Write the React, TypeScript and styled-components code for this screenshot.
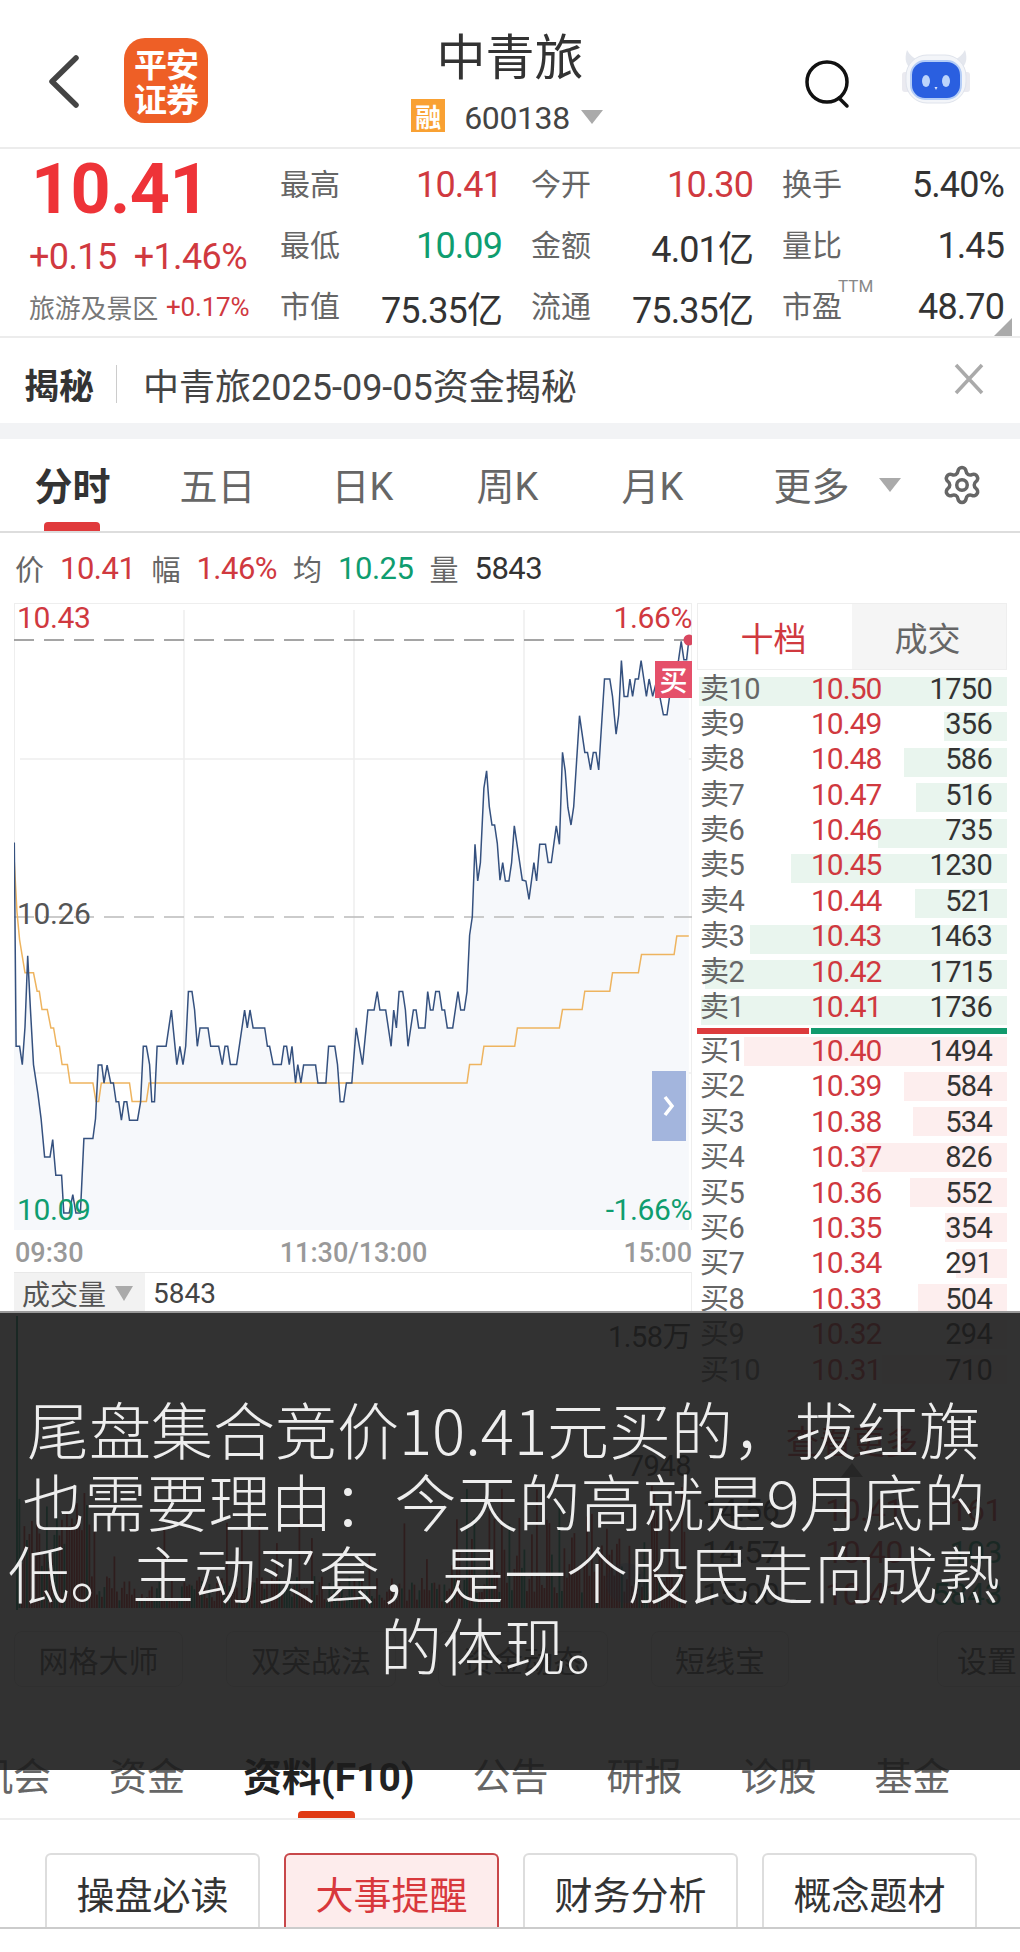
import styled, { createGlobalStyle } from 'styled-components';
import { Settings } from 'lucide-react';

const NUM = `Roboto, 'Noto Sans CJK SC', sans-serif`;
const CJK = `'Noto Sans CJK SC', sans-serif`;
const RED = '#d0393f';
const GREEN = '#0f9d6f';

const GlobalStyle = createGlobalStyle`
  html, body { margin: 0; padding: 0; background: #fff; }
  * { box-sizing: border-box; }
  body { font-family: ${CJK}; }
`;

// points read off the reference crop, converted to chart coordinates below
const PRICE = [[32,528],[36,972],[44,972],[50,1012],[56,930],[62,775],[68,890],[75,1012],[85,1075],[92,1130],[100,1213],[112,1213],[118,1175],[125,1253],[138,1253],[143,1335],[155,1335],[163,1295],[170,1335],[180,1335],[188,1173],[208,1173],[214,1130],[220,1013],[228,1013],[233,1052],[240,1013],[248,1052],[254,1052],[260,1093],[266,1093],[272,1133],[278,1093],[284,1093],[290,1133],[308,1133],[315,1093],[321,972],[328,972],[335,1012],[340,1093],[346,1093],[352,972],[372,972],[384,893],[396,1012],[403,972],[410,1012],[416,972],[422,853],[430,853],[436,893],[442,972],[448,932],[466,932],[472,972],[490,972],[498,1012],[504,972],[510,972],[516,1012],[530,1012],[548,893],[554,932],[560,893],[567,932],[593,932],[599,972],[604,972],[612,1012],[630,1012],[636,972],[642,972],[648,1012],[654,972],[662,1052],[667,1012],[674,1052],[680,1013],[707,1013],[712,1052],[730,1052],[736,972],[750,972],[756,1012],[762,1093],[770,1093],[776,1052],[788,1052],[798,932],[812,1012],[824,893],[838,893],[845,853],[851,893],[864,893],[876,972],[882,893],[888,932],[894,853],[902,853],[908,893],[914,972],[926,893],[932,893],[938,932],[952,932],[958,853],[964,893],[970,893],[976,853],[984,853],[990,893],[996,893],[1002,932],[1014,932],[1026,853],[1032,893],[1040,893],[1046,853],[1052,730],[1058,690],[1064,532],[1070,612],[1076,572],[1084,410],[1090,372],[1096,450],[1102,490],[1108,490],[1114,530],[1120,610],[1126,572],[1132,612],[1140,612],[1146,572],[1152,492],[1170,610],[1178,612],[1185,652],[1196,572],[1202,612],[1209,532],[1222,532],[1228,572],[1235,572],[1246,492],[1253,532],[1260,332],[1266,372],[1272,452],[1279,490],[1285,450],[1298,252],[1310,332],[1316,332],[1323,370],[1329,332],[1335,332],[1341,370],[1354,172],[1366,172],[1372,210],[1380,292],[1386,250],[1392,132],[1398,210],[1406,210],[1411,172],[1417,210],[1423,172],[1430,172],[1436,132],[1448,210],[1454,172],[1462,210],[1472,172],[1478,210],[1486,250],[1494,250],[1500,210],[1512,172],[1520,130],[1526,90],[1532,130],[1538,130],[1543,88]];
const AVG = [[32,570],[38,680],[44,740],[56,812],[75,812],[83,852],[88,852],[94,892],[106,892],[114,932],[120,932],[127,972],[133,972],[139,1012],[151,1012],[157,1052],[208,1052],[215,1092],[221,1092],[227,1052],[290,1052],[296,1092],[328,1092],[334,1052],[1046,1052],[1052,1012],[1078,1012],[1084,972],[1153,972],[1159,932],[1253,932],[1260,892],[1304,892],[1310,852],[1366,852],[1372,812],[1430,812],[1437,772],[1510,772],[1516,732],[1543,732]];

const toChart = (pts: number[][]) =>
  pts.map(([x, y]) => `${(x / 2.24 - 14).toFixed(1)},${(y / 2.178 + 600 - 604).toFixed(1)}`).join(' ');

const SELLS: [string, string, number][] = [
  ['10', '10.50', 1750], ['9', '10.49', 356], ['8', '10.48', 586], ['7', '10.47', 516], ['6', '10.46', 735],
  ['5', '10.45', 1230], ['4', '10.44', 521], ['3', '10.43', 1463], ['2', '10.42', 1715], ['1', '10.41', 1736],
];
const BUYS: [string, string, number][] = [
  ['1', '10.40', 1494], ['2', '10.39', 584], ['3', '10.38', 534], ['4', '10.37', 826], ['5', '10.36', 552],
  ['6', '10.35', 354], ['7', '10.34', 291], ['8', '10.33', 504], ['9', '10.32', 294], ['10', '10.31', 710],
];

const volumeBars = () => {
  const bars = [];
  for (let i = 0; i < 268; i++) {
    const r = Math.abs(Math.sin(i * 12.9898) * 43758.5453) % 1;
    const r2 = Math.abs(Math.sin(i * 78.233) * 12543.123) % 1;
    let h = 6 + r * 26;
    if (i < 30) h = 40 + r * 75;
    else if (i > 170) h = 15 + r * r * 110;
    else if (r2 > 0.9) h = 40 + r * 50;
    bars.push({ x: 2 + i * 2.5, h, up: r2 > 0.35 });
  }
  return bars;
};

const Page = styled.div`
  position: relative;
  width: 1020px;
  height: 1952px;
  overflow: hidden;
  background: #fff;
`;

const Header = styled.header`
  height: 149px;
  display: grid;
  grid-template-columns: 1fr auto 1fr;
  border-bottom: 2px solid #ececec;
`;

const HeaderLeft = styled.div`
  display: flex;
  align-items: flex-start;
  padding: 38px 0 0 47px;
  gap: 44px;
`;

const BackIcon = styled.svg`
  width: 33px;
  height: 55px;
  margin-top: 16px;
`;

const Logo = styled.div`
  width: 84px;
  height: 85px;
  border-radius: 21px;
  background: #ee5f26;
  color: #fff;
  font-weight: 700;
  font-size: 33px;
  line-height: 35px;
  letter-spacing: -1px;
  display: flex;
  align-items: center;
  justify-content: center;
  text-align: center;
`;

const TitleBlock = styled.div`
  display: flex;
  flex-direction: column;
  align-items: center;
  padding-top: 20px;
`;

const Title = styled.div`
  font-size: 49px;
  line-height: 68px;
  color: #333;
`;

const CodeRow = styled.div`
  display: flex;
  align-items: center;
  margin-top: 4px;
  margin-left: -6px;
`;

const Badge = styled.span`
  width: 34px;
  height: 33px;
  background: #f9a133;
  color: #fff;
  font-size: 26px;
  font-weight: 700;
  line-height: 33px;
  text-align: center;
  overflow: hidden;
`;

const Code = styled.span`
  font-family: ${NUM};
  font-size: 32px;
  color: #444;
  margin-left: 19px;
  letter-spacing: -0.4px;
  line-height: 40px;
  padding-top: 6px;
`;

const Caret = styled.span`
  width: 0;
  height: 0;
  border-left: 11px solid transparent;
  border-right: 11px solid transparent;
  border-top: 14px solid #aaa;
`;

const CodeCaret = styled(Caret)`
  margin: 4px 0 0 11px;
`;

const HeaderRight = styled.div`
  display: flex;
  justify-content: flex-end;
  align-items: flex-start;
  padding: 48px 50px 0 0;
  gap: 52px;
`;

const SearchIcon = styled.svg`
  width: 46px;
  height: 50px;
  margin-top: 12px;
`;

const RobotIcon = styled.svg`
  width: 68px;
  height: 56px;
`;

const Quote = styled.section`
  position: relative;
  height: 189px;
  display: flex;
  border-bottom: 2px solid #ececec;
`;

const QuoteLeft = styled.div`
  width: 280px;
  padding-left: 29px;
`;

const BigPrice = styled.div`
  font-family: ${NUM};
  font-size: 70px;
  font-weight: 700;
  color: #ee3338;
  line-height: 80px;
  margin: 0 0 0 2px;
  letter-spacing: -0.6px;
`;

const ChangeRow = styled.div`
  display: flex;
  gap: 17px;
  font-family: ${NUM};
  font-size: 36px;
  letter-spacing: -0.6px;
  color: ${RED};
  line-height: 44px;
  margin-top: 6px;
`;

const SectorRow = styled.div`
  display: flex;
  align-items: center;
  gap: 8px;
  margin-top: 9px;
  font-size: 26px;
  color: #777;
  line-height: 38px;
  letter-spacing: -0.2px;
`;

const SectorValue = styled.span`
  font-family: ${NUM};
  font-size: 26px;
  color: ${RED};
`;

const StatGrid = styled.div`
  display: grid;
  grid-template-columns: repeat(3, 222px);
  grid-auto-rows: 61px;
  column-gap: 29px;
  padding-top: 5px;
`;

const Stat = styled.div`
  display: flex;
  justify-content: space-between;
  align-items: center;
`;

const StatLabel = styled.span`
  position: relative;
  font-size: 30px;
  line-height: 36px;
  padding-bottom: 5px;
  color: #666;
`;

const StatValue = styled.span<{ $color?: string }>`
  font-family: ${NUM};
  font-size: 36px;
  letter-spacing: -0.9px;
  color: ${p => p.$color || '#333'};
`;

const Ttm = styled.sup`
  position: absolute;
  left: 56px;
  top: -10px;
  font-family: ${NUM};
  font-size: 17px;
  line-height: 20px;
  color: #888;
`;

const CornerMark = styled.span`
  position: absolute;
  right: 8px;
  bottom: 0;
  width: 0;
  height: 0;
  border-left: 18px solid transparent;
  border-bottom: 18px solid #aaa;
`;

const Banner = styled.div`
  height: 85px;
  display: flex;
  align-items: center;
  padding: 7px 35px 0 24px;
`;

const BannerTag = styled.span`
  font-size: 35px;
  font-weight: 700;
  color: #333;
  padding-right: 22px;
  line-height: 38px;
  border-right: 1px solid #ccc;
`;

const BannerText = styled.span`
  flex: 1;
  font-family: ${NUM};
  font-size: 36px;
  color: #444;
  margin-left: 26px;
`;

const CloseIcon = styled.svg`
  width: 32px;
  height: 32px;
  margin-top: -10px;
`;

const Band = styled.div`
  height: 16px;
  background: #f2f3f5;
`;

const Tabs = styled.nav`
  height: 94px;
  display: flex;
  align-items: center;
  border-bottom: 2px solid #ddd;
`;

const TabItem = styled.div<{ $active?: boolean }>`
  position: relative;
  width: 145px;
  height: 100%;
  display: flex;
  align-items: center;
  justify-content: center;
  padding-bottom: 4px;
  font-family: ${NUM};
  font-size: 38px;
  font-weight: ${p => (p.$active ? 700 : 400)};
  color: ${p => (p.$active ? '#333' : '#666')};
`;

const TabMark = styled.span`
  position: absolute;
  left: 44px;
  bottom: 0;
  width: 56px;
  height: 9px;
  border-radius: 4px 4px 0 0;
  background: #e03a3c;
`;

const MoreTab = styled(TabItem)`
  margin-left: 39px;
  width: 146px;
`;

const MoreCaret = styled(Caret)`
  margin: 4px 0 0 29px;
`;

const GearWrap = styled.div`
  margin-left: auto;
  padding-right: 37px;
  color: #666;
  display: flex;
`;

const InfoRow = styled.div`
  height: 70px;
  display: flex;
  align-items: center;
  gap: 16px;
  padding-left: 15px;
  font-size: 29px;
  color: #666;
`;

const InfoValue = styled.span<{ $color: string }>`
  font-family: ${NUM};
  font-size: 31px;
  letter-spacing: -0.5px;
  color: ${p => p.$color};
`;

const Main = styled.div`
  display: flex;
  height: 1137px;
  padding-left: 14px;
  gap: 5px;
`;

const LeftCol = styled.div`
  width: 678px;
`;

const ChartBox = styled.div`
  position: relative;
  height: 627px;
  border-top: 1px solid #eee;
`;

const ChartSvg = styled.svg`
  display: block;
`;

const ChartLabel = styled.span<{ $color: string; $side: 'left' | 'right'; $top: number }>`
  position: absolute;
  top: ${p => p.$top}px;
  ${p => p.$side}: ${p => (p.$side === 'left' ? 3 : 0)}px;
  font-family: ${NUM};
  font-size: 30px;
  line-height: 30px;
  letter-spacing: -0.4px;
  color: ${p => p.$color};
`;

const BuyTag = styled.span`
  position: absolute;
  left: 641px;
  top: 57px;
  width: 37px;
  height: 37px;
  background: #e5506a;
  color: #fff;
  font-size: 28px;
  font-weight: 500;
  line-height: 36px;
  text-align: center;
`;

const ExpandTab = styled.div`
  position: absolute;
  left: 638px;
  top: 467px;
  width: 34px;
  height: 70px;
  background: #a3b5dd;
  display: flex;
  align-items: center;
  justify-content: center;
`;

const TimeAxis = styled.div`
  height: 42px;
  display: flex;
  justify-content: space-between;
  align-items: center;
  padding: 4px 0 0 1px;
  font-family: ${NUM};
  font-size: 27px;
  font-weight: 500;
  color: #999;
`;

const VolumeHead = styled.div`
  height: 41px;
  display: flex;
  align-items: center;
  border-top: 1px solid #e8e8e8;
  border-right: 1px solid #eee;
`;

const VolumeSelect = styled.div`
  width: 131px;
  height: 100%;
  background: #f2f2f2;
  display: flex;
  align-items: center;
  padding-left: 8px;
  font-size: 28px;
  color: #555;
  gap: 9px;
`;

const VolumeCaret = styled(Caret)`
  border-left-width: 9px;
  border-right-width: 9px;
  border-top-width: 15px;
`;

const VolumeValue = styled.span`
  font-family: ${NUM};
  font-size: 28px;
  color: #444;
  margin-left: 8px;
`;

const VolumeChart = styled.div`
  position: relative;
  height: 297px;
`;

const VolumeSvg = styled.svg`
  display: block;
`;

const VolumeTag = styled.span<{ $top: number }>`
  position: absolute;
  right: 1px;
  top: ${p => p.$top}px;
  font-family: ${NUM};
  font-size: 29px;
  letter-spacing: -0.5px;
  color: #333;
`;

const ToolBar = styled.div`
  display: flex;
  margin-top: 21px;
  height: 56px;
  width: 1006px;
`;

const ToolButton = styled.div<{ $w: number; $gap: number }>`
  width: ${p => p.$w}px;
  margin-right: ${p => p.$gap}px;
  flex: none;
  border: 1px solid #ddd;
  border-radius: 8px;
  display: flex;
  align-items: center;
  justify-content: center;
  font-size: 30px;
  color: #555;
`;

const RightCol = styled.div`
  width: 310px;
`;

const BookTabs = styled.div`
  display: flex;
  height: 67px;
  font-size: 33px;
  border: 1px solid #eee;
`;

const BookTab = styled.div<{ $active?: boolean }>`
  flex: 1;
  display: flex;
  align-items: center;
  justify-content: center;
  padding-right: 3px;
  background: ${p => (p.$active ? '#fff' : '#f5f5f5')};
  color: ${p => (p.$active ? RED : '#666')};
`;

const BookList = styled.div<{ $top: number }>`
  display: flex;
  flex-direction: column;
  gap: 6.4px;
  margin-top: ${p => p.$top}px;
`;

const BookRow = styled.div<{ $lift: number }>`
  position: relative;
  height: 29px;
  display: flex;
  align-items: center;
  padding: 0 15px ${p => p.$lift}px 3px;
`;

const DepthBar = styled.span<{ $color: string }>`
  position: absolute;
  top: 0;
  right: 0;
  bottom: 0;
  background: ${p => p.$color};
`;

const RowLabel = styled.span`
  position: relative;
  width: 111px;
  font-size: 29px;
  line-height: 24px;
  color: #666;
  font-family: ${NUM};
  letter-spacing: -0.5px;
`;

const RowPrice = styled.span`
  position: relative;
  font-family: ${NUM};
  font-size: 30px;
  line-height: 22px;
  letter-spacing: -1px;
  color: ${RED};
`;

const RowQty = styled.span`
  position: relative;
  margin-left: auto;
  font-family: ${NUM};
  font-size: 29px;
  line-height: 22px;
  letter-spacing: -0.7px;
  color: #333;
`;

const SplitBar = styled.div`
  display: flex;
  height: 6px;
  margin-top: 3px;
  gap: 2px;
`;

const SplitPart = styled.span<{ $color: string; $w: number }>`
  width: ${p => p.$w}px;
  background: ${p => p.$color};
`;

const MoreLink = styled.div`
  margin-top: 36px;
  text-align: center;
  font-size: 33px;
  line-height: 40px;
  color: ${RED};
`;

const UpCaret = styled.span`
  display: block;
  width: 0;
  margin: 3px auto 0 auto;
  border-left: 11px solid transparent;
  border-right: 11px solid transparent;
  border-bottom: 14px solid #888;
`;

const TradeList = styled.div`
  display: flex;
  flex-direction: column;
  margin-top: 12px;
`;

const TradeRow = styled.div`
  height: 42px;
  display: flex;
  align-items: center;
  padding: 0 5px;
  font-family: ${NUM};
  font-size: 32px;
  letter-spacing: -0.5px;
  color: #333;
`;

const TradePrice = styled.span`
  color: ${RED};
  margin-left: 46px;
`;

const TradeQty = styled.span<{ $color: string }>`
  margin-left: auto;
  color: ${p => p.$color};
`;

const SubTabBar = styled.div`
  position: relative;
  height: 80px;
  overflow: hidden;
  border-bottom: 2px solid #eee;
`;

const SubTabs = styled.nav`
  height: 79px;
  display: flex;
  align-items: center;
  gap: 58px;
  margin-left: -25px;
  width: 1045px;
  padding-bottom: 12px;
`;

const SubTab = styled.span<{ $active?: boolean }>`
  font-family: ${NUM};
  font-size: ${p => (p.$active ? 39 : 38)}px;
  font-weight: ${p => (p.$active ? 700 : 400)};
  color: ${p => (p.$active ? '#222' : '#666')};
`;

const SubTabMark = styled.span`
  position: absolute;
  left: 298px;
  bottom: 0;
  width: 57px;
  height: 7px;
  border-radius: 4px 4px 0 0;
  background: #e03a14;
`;

const CardRow = styled.div`
  display: flex;
  gap: 24px;
  padding: 33px 0 0 45px;
`;

const Card = styled.div<{ $active?: boolean }>`
  width: 215px;
  height: 74px;
  border: 2px solid ${p => (p.$active ? '#c8474a' : '#ddd')};
  border-bottom: 0;
  border-radius: 6px 6px 0 0;
  background: ${p => (p.$active ? '#fdecec' : '#fff')};
  color: ${p => (p.$active ? '#d8383c' : '#333')};
  font-size: 38px;
  display: flex;
  align-items: center;
  justify-content: center;
  padding-top: 2px;
`;

const BottomLine = styled.div`
  border-top: 2px solid #ccc;
`;

const Caption = styled.div`
  position: absolute;
  left: 0;
  right: 0;
  top: 1311px;
  height: 459px;
  padding: 79px 16px 0 4px;
  background: rgba(28, 28, 28, 0.9);
  border-top: 2px solid #999;
  color: #eee;
  font-family: ${CJK};
  font-size: 62px;
  font-weight: 300;
  line-height: 72px;
  text-align: center;
`;

const StockHeader = () => (
  <Header>
    <HeaderLeft>
      <BackIcon viewBox="0 0 33 55" fill="none">
        <path d="M29 4 L5 27.5 L29 51" stroke="#444" strokeWidth="5.5" strokeLinecap="round" strokeLinejoin="round" />
      </BackIcon>
      <Logo>平安<br />证券</Logo>
    </HeaderLeft>
    <TitleBlock>
      <Title>中青旅</Title>
      <CodeRow>
        <Badge>融</Badge>
        <Code>600138</Code>
        <CodeCaret />
      </CodeRow>
    </TitleBlock>
    <HeaderRight>
      <SearchIcon viewBox="0 0 46 50" fill="none">
        <circle cx="23" cy="22" r="20" stroke="#111" strokeWidth="3.5" />
        <path d="M35 38 L43 46" stroke="#111" strokeWidth="3.5" strokeLinecap="round" />
      </SearchIcon>
      <RobotIcon viewBox="0 0 68 56">
        <path d="M5 2 C2 11 4 18 10 21 L15 11 C11 10 8 7 5 2 Z M63 2 C66 11 64 18 58 21 L53 11 C57 10 60 7 63 2 Z" fill="#e4e7ee" />
        <rect x="0" y="24" width="8" height="20" rx="3" fill="#eaeaf0" />
        <rect x="60" y="24" width="8" height="20" rx="3" fill="#eaeaf0" />
        <rect x="4" y="7" width="60" height="48" rx="21" fill="#f3f5f9" stroke="#dfe3ec" />
        <rect x="9" y="13" width="50" height="38" rx="14" fill="#2a5fe0" stroke="#b4cdf7" strokeWidth="2" />
        <ellipse cx="24" cy="33" rx="4" ry="6" fill="#bcd4fb" />
        <ellipse cx="44" cy="33" rx="4" ry="6" fill="#bcd4fb" />
        <path d="M32.5 39 h3 l-1.5 3 z" fill="#dbe7fd" />
      </RobotIcon>
    </HeaderRight>
  </Header>
);

const QuotePanel = () => (
  <Quote>
    <QuoteLeft>
      <BigPrice>10.41</BigPrice>
      <ChangeRow><span>+0.15</span><span>+1.46%</span></ChangeRow>
      <SectorRow>旅游及景区<SectorValue>+0.17%</SectorValue></SectorRow>
    </QuoteLeft>
    <StatGrid>
      <Stat><StatLabel>最高</StatLabel><StatValue $color={RED}>10.41</StatValue></Stat>
      <Stat><StatLabel>今开</StatLabel><StatValue $color={RED}>10.30</StatValue></Stat>
      <Stat><StatLabel>换手</StatLabel><StatValue>5.40%</StatValue></Stat>
      <Stat><StatLabel>最低</StatLabel><StatValue $color={GREEN}>10.09</StatValue></Stat>
      <Stat><StatLabel>金额</StatLabel><StatValue>4.01亿</StatValue></Stat>
      <Stat><StatLabel>量比</StatLabel><StatValue>1.45</StatValue></Stat>
      <Stat><StatLabel>市值</StatLabel><StatValue>75.35亿</StatValue></Stat>
      <Stat><StatLabel>流通</StatLabel><StatValue>75.35亿</StatValue></Stat>
      <Stat><StatLabel>市盈<Ttm>TTM</Ttm></StatLabel><StatValue>48.70</StatValue></Stat>
    </StatGrid>
    <CornerMark />
  </Quote>
);

const PriceChart = () => {
  const linePts = toChart(PRICE);
  const last = PRICE[PRICE.length - 1];
  const lastX = last[0] / 2.24 - 14;
  return (
    <ChartBox>
      <ChartSvg width="678" height="626" viewBox="0 0 678 626">
        <line x1="0.5" y1="0" x2="0.5" y2="626" stroke="#eee" />
        <line x1="677.5" y1="0" x2="677.5" y2="626" stroke="#eee" />
        {[170, 340, 510].map(x => <line key={x} x1={x} y1="6" x2={x} y2="626" stroke="#eee" strokeWidth="1.5" />)}
        {[155, 469].map(y => <line key={y} x1="6" y1={y} x2="678" y2={y} stroke="#eee" strokeWidth="1.5" />)}
        <polygon points={`0,626 ${linePts} ${lastX},626`} fill="#f6f8fb" />
        <line x1="0" y1="36" x2="678" y2="36" stroke="#888" strokeWidth="1.5" strokeDasharray="20 10" />
        <line x1="0" y1="313" x2="678" y2="313" stroke="#bbb" strokeWidth="1.5" strokeDasharray="20 10" />
        <polyline points={toChart(AVG)} fill="none" stroke="#eeb45f" strokeWidth="1.5" />
        <polyline points={linePts} fill="none" stroke="#35517f" strokeWidth="1.5" />
        <circle cx="675" cy="36" r="5.5" fill="#d8475f" />
      </ChartSvg>
      <ChartLabel $side="left" $top={-1} $color={RED}>10.43</ChartLabel>
      <ChartLabel $side="right" $top={-1} $color={RED}>1.66%</ChartLabel>
      <ChartLabel $side="left" $top={295} $color="#555">10.26</ChartLabel>
      <ChartLabel $side="left" $top={591} $color={GREEN}>10.09</ChartLabel>
      <ChartLabel $side="right" $top={591} $color={GREEN}>-1.66%</ChartLabel>
      <BuyTag>买</BuyTag>
      <ExpandTab>
        <svg width="14" height="24" viewBox="0 0 14 24" fill="none">
          <path d="M3 3 L10 12 L3 21" stroke="#fff" strokeWidth="3.5" />
        </svg>
      </ExpandTab>
    </ChartBox>
  );
};

const VolumePanel = () => (
  <VolumeChart>
    <VolumeSvg width="678" height="297" viewBox="0 0 678 297">
      <rect x="2" y="3" width="2" height="295" fill={GREEN} />
      {volumeBars().map((b, i) => (
        <rect key={i} x={b.x} y={295 - b.h} width="1.8" height={b.h} fill={b.up ? '#d03030' : GREEN} />
      ))}
      <circle cx="612" cy="270" r="20" fill="#6a7cc0" opacity="0.35" />
    </VolumeSvg>
    <VolumeTag $top={0}>1.58万</VolumeTag>
    <VolumeTag $top={136}>7948</VolumeTag>
  </VolumeChart>
);

const Book = () => (
  <RightCol>
    <BookTabs>
      <BookTab $active>十档</BookTab>
      <BookTab>成交</BookTab>
    </BookTabs>
    <BookList $top={7}>
      {SELLS.map(([n, price, qty]) => (
        <BookRow key={n} $lift={6}>
          <DepthBar $color="#e9f5ee" style={{ width: (qty / 1750) * 308 }} />
          <RowLabel>卖{n}</RowLabel>
          <RowPrice>{price}</RowPrice>
          <RowQty>{qty}</RowQty>
        </BookRow>
      ))}
    </BookList>
    <SplitBar>
      <SplitPart $color="#dc3b3d" $w={112} />
      <SplitPart $color="#129a6d" $w={196} />
    </SplitBar>
    <BookList $top={3}>
      {BUYS.map(([n, price, qty]) => (
        <BookRow key={n} $lift={0}>
          <DepthBar $color="#fdeeee" style={{ width: (qty / 1750) * 308 }} />
          <RowLabel>买{n}</RowLabel>
          <RowPrice>{price}</RowPrice>
          <RowQty>{qty}</RowQty>
        </BookRow>
      ))}
    </BookList>
    <MoreLink>查看更多</MoreLink>
    <UpCaret />
    <TradeList>
      <TradeRow>14:56<TradePrice>10.41</TradePrice><TradeQty $color={RED}>161</TradeQty></TradeRow>
      <TradeRow>14:57<TradePrice>10.40</TradePrice><TradeQty $color={GREEN}>103</TradeQty></TradeRow>
      <TradeRow>15:00<TradePrice>10.41</TradePrice><TradeQty $color={GREEN}>5843</TradeQty></TradeRow>
    </TradeList>
  </RightCol>
);

export default function App() {
  return (
    <Page>
      <GlobalStyle />
      <StockHeader />
      <QuotePanel />
      <Banner>
        <BannerTag>揭秘</BannerTag>
        <BannerText>中青旅2025-09-05资金揭秘</BannerText>
        <CloseIcon viewBox="0 0 32 32" fill="none">
          <path d="M3 2 L29 30 M29 2 L3 30" stroke="#aaa" strokeWidth="3.5" />
        </CloseIcon>
      </Banner>
      <Band />
      <Tabs>
        <TabItem $active>分时<TabMark /></TabItem>
        <TabItem>五日</TabItem>
        <TabItem>日K</TabItem>
        <TabItem>周K</TabItem>
        <TabItem>月K</TabItem>
        <MoreTab>更多<MoreCaret /></MoreTab>
        <GearWrap><Settings size={42} strokeWidth={2} /></GearWrap>
      </Tabs>
      <InfoRow>
        <span>价</span><InfoValue $color={RED}>10.41</InfoValue>
        <span>幅</span><InfoValue $color={RED}>1.46%</InfoValue>
        <span>均</span><InfoValue $color={GREEN}>10.25</InfoValue>
        <span>量</span><InfoValue $color="#333">5843</InfoValue>
      </InfoRow>
      <Main>
        <LeftCol>
          <PriceChart />
          <TimeAxis><span>09:30</span><span>11:30/13:00</span><span>15:00</span></TimeAxis>
          <VolumeHead>
            <VolumeSelect>成交量<VolumeCaret /></VolumeSelect>
            <VolumeValue>5843</VolumeValue>
          </VolumeHead>
          <VolumePanel />
          <ToolBar>
            <ToolButton $w={169} $gap={43}>网格大师</ToolButton>
            <ToolButton $w={170} $gap={42}>双突战法</ToolButton>
            <ToolButton $w={170} $gap={43}>资金动态</ToolButton>
            <ToolButton $w={138} $gap={148}>短线宝</ToolButton>
            <ToolButton $w={100} $gap={0}>设置</ToolButton>
          </ToolBar>
        </LeftCol>
        <Book />
      </Main>
      <SubTabBar>
        <SubTabs>
          <SubTab>机会</SubTab>
          <SubTab>资金</SubTab>
          <SubTab $active>资料(F10)</SubTab>
          <SubTab>公告</SubTab>
          <SubTab>研报</SubTab>
          <SubTab>诊股</SubTab>
          <SubTab>基金</SubTab>
        </SubTabs>
        <SubTabMark />
      </SubTabBar>
      <CardRow>
        <Card>操盘必读</Card>
        <Card $active>大事提醒</Card>
        <Card>财务分析</Card>
        <Card>概念题材</Card>
      </CardRow>
      <BottomLine />
      <Caption>尾盘集合竞价10.41元买的，拔红旗也需要理由：今天的高就是9月底的低。主动买套，是一个股民走向成熟的体现。</Caption>
    </Page>
  );
}
